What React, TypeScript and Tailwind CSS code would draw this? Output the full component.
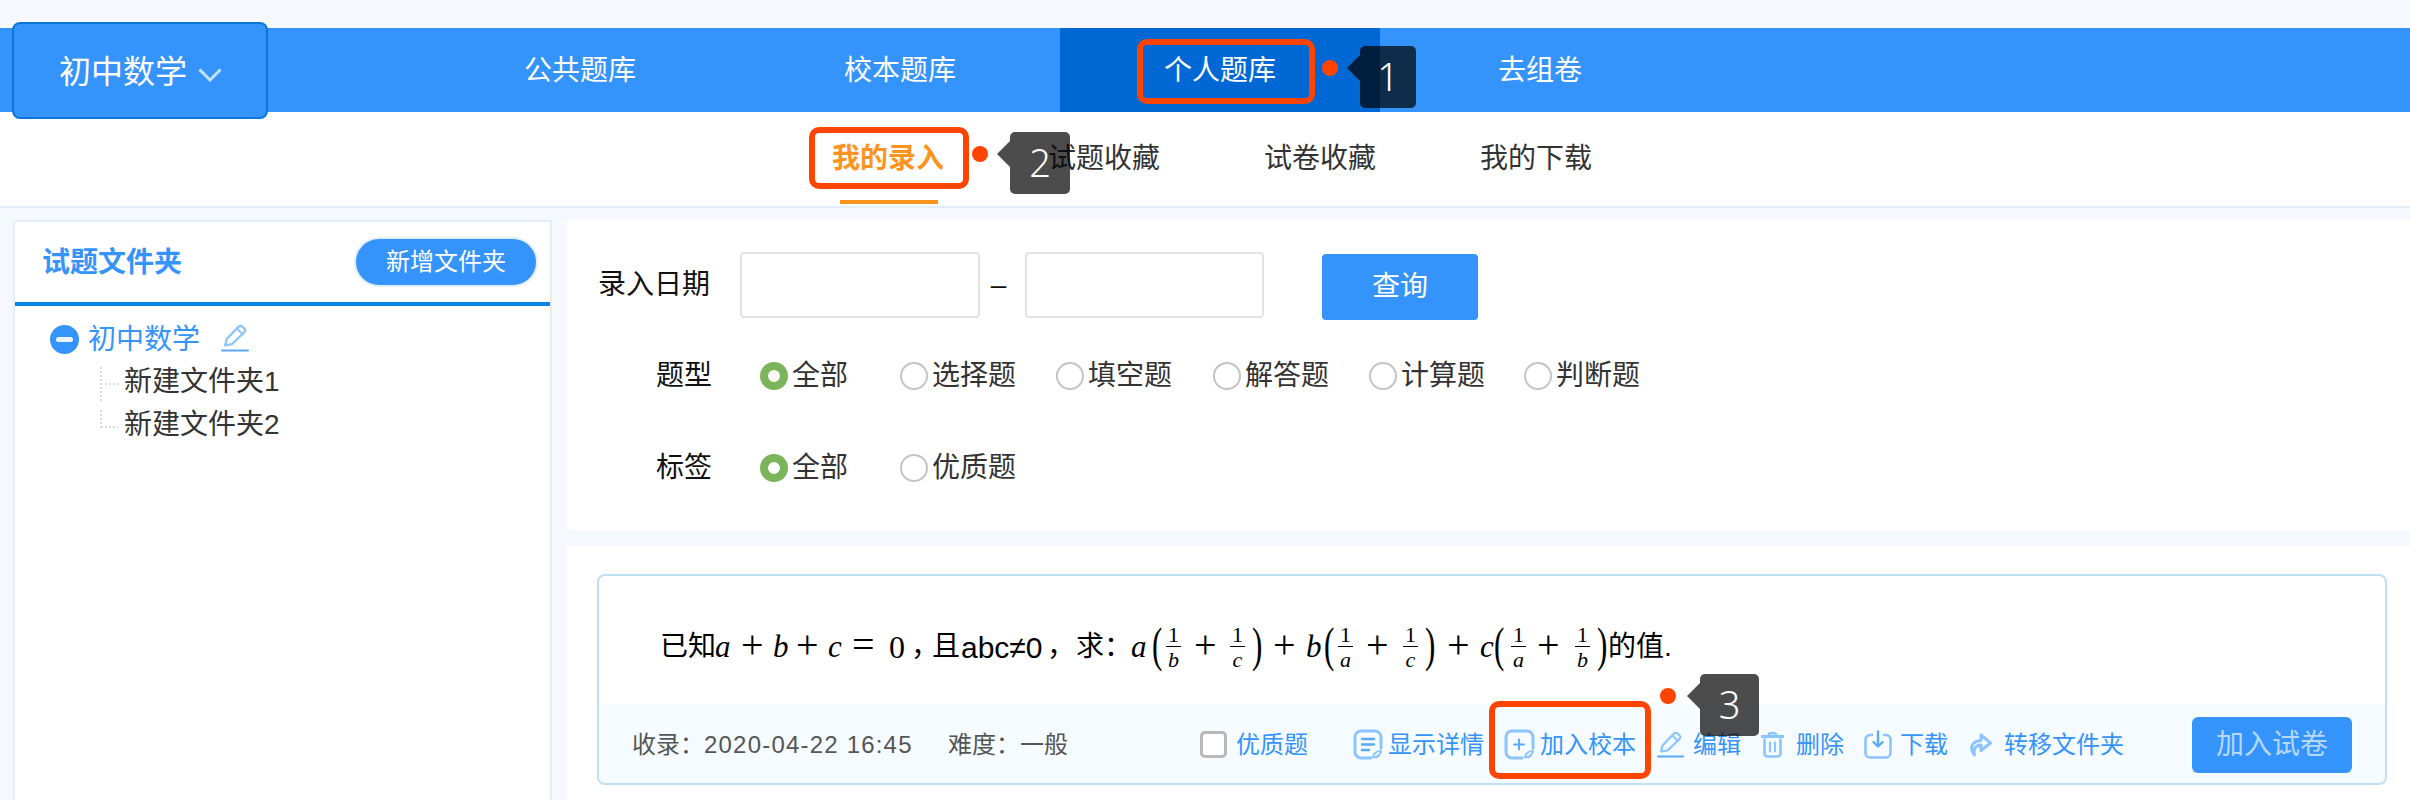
import React from "react";

const FONT = "[font-family:'Liberation_Sans','Noto_Sans_CJK_SC',sans-serif]";
const BLUE = "text-[#3594fb]";

function Callout({ n, dot, tip, tipBody }: { n: string; dot: string; tip: string; tipBody: string }) {
  return (
    <>
      <div className={`absolute w-[16px] h-[16px] rounded-full bg-[#ff4400] ${dot}`} />
      <div className={`absolute w-0 h-0 border-y-[13px] border-r-[13px] border-y-transparent border-r-[rgba(0,0,0,0.7)] ${tip}`} />
      <div
        className={`absolute rounded-[5px] bg-[rgba(0,0,0,0.7)] text-white flex items-center justify-center pb-[2px] text-[38px] font-light [font-family:'Noto_Sans',sans-serif] ${tipBody}`}
      >
        {n}
      </div>
    </>
  );
}

function Radio({ label, on, cls }: { label: string; on?: boolean; cls: string }) {
  return (
    <div className={`flex items-center ${cls}`}>
      {on ? (
        <span className="w-[28px] h-[28px] rounded-full border-[8px] border-[#7ab55c] bg-white" />
      ) : (
        <span className="w-[28px] h-[28px] rounded-full border-[2px] border-[#c4c4c4] bg-white" />
      )}
      <span className="ml-[4px] text-[28px] text-[#333]">{label}</span>
    </div>
  );
}

function T({ w, c = "", children }: { w: string; c?: string; children: React.ReactNode }) {
  return <span className={`inline-block shrink-0 ${w} ${c}`}>{children}</span>;
}

const MI = "[font-family:'Liberation_Serif',serif] italic text-[31px]";
const MR = "[font-family:'Liberation_Serif',serif] text-[32px]";
const OP = "[font-family:'Liberation_Serif',serif] text-[40px] leading-none -mt-[4px]";
const PAREN = "[font-family:'Liberation_Serif',serif] text-[31px] leading-none scale-y-[1.6] -mt-[6px]";

function Frac({ d, w }: { d: string; w: string }) {
  return (
    <span className={`inline-flex shrink-0 flex-col items-start ${w} [font-family:'Liberation_Serif',serif] text-[22px] leading-[21px]`}>
      <span className="w-[15px] text-center pb-[1px]">1</span>
      <span className="w-[15px] h-[1px] bg-black" />
      <span className="w-[15px] text-center italic pt-[2px]">{d}</span>
    </span>
  );
}

const IC = "#8cc4fd";

function IconDetail() {
  return (
    <svg width="30" height="31" viewBox="0 0 30 31" fill="none" stroke={IC} strokeWidth="3" strokeLinecap="round" className="shrink-0">
      <path d="M18 29H8a6 6 0 0 1-6-6V8a6 6 0 0 1 6-6h14a6 6 0 0 1 6 6v11" />
      <path d="M9 10h12M9 15.5h12M9 21h7" strokeWidth="2.4" stroke="#5aa9fb" />
      <path d="M20 28c1-4 4-6 8-6-0.5 4-3.5 7-8 6z" strokeWidth="2" />
    </svg>
  );
}

function IconAdd() {
  return (
    <svg width="31" height="31" viewBox="0 0 31 31" fill="none" stroke={IC} strokeWidth="3" strokeLinecap="round" className="shrink-0">
      <path d="M18 29H8a6 6 0 0 1-6-6V8a6 6 0 0 1 6-6h15a6 6 0 0 1 6 6v11" />
      <path d="M15 10.5v10M10 15.5h10" strokeWidth="2" stroke="#5aa9fb" />
      <path d="M21 28c1-4 4-6 8-6-0.5 4-3.5 7-8 6z" strokeWidth="2" />
    </svg>
  );
}

function IconPencil({ size = 27 }: { size?: number }) {
  return (
    <svg width={size} height={size} viewBox="0 0 27 27" fill="none" strokeLinecap="round" strokeLinejoin="round" className="shrink-0">
      <path d="M1 25.5h25" stroke="#5aa9fb" strokeWidth="2" />
      <path d="M4 20.5l1.5-6L17 2.5c1-1 2.5-1 3.5 0l2 2c1 1 1 2.5 0 3.5L10.5 19.5z" stroke={IC} strokeWidth="2.2" />
      <path d="M15.5 4.5l5.5 5.5" stroke={IC} strokeWidth="2" />
    </svg>
  );
}

function IconTrash() {
  return (
    <svg width="23" height="27" viewBox="0 0 23 27" fill="none" stroke={IC} strokeLinecap="round" className="shrink-0">
      <path d="M1 5.5h21" strokeWidth="3" />
      <path d="M8 3.5C8 1.5 15 1.5 15 3.5" strokeWidth="2.5" />
      <path d="M3.5 8.5v14a3 3 0 0 0 3 3h10a3 3 0 0 0 3-3v-14" strokeWidth="2.6" />
      <path d="M9 11.5v9M14 11.5v9" strokeWidth="2.2" />
    </svg>
  );
}

function IconDownload() {
  return (
    <svg width="28" height="29" viewBox="0 0 28 29" fill="none" strokeLinecap="round" strokeLinejoin="round" className="shrink-0">
      <path d="M8 5H6a4.5 4.5 0 0 0-4.5 4.5v14A4.5 4.5 0 0 0 6 27.5h16a4.5 4.5 0 0 0 4.5-4.5V9.5A4.5 4.5 0 0 0 22 5h-2" stroke={IC} strokeWidth="2.6" />
      <path d="M14 1.5v14" stroke="#5aa9fb" strokeWidth="2.4" />
      <path d="M9.5 12l4.5 4.5 4.5-4.5" stroke="#5aa9fb" strokeWidth="2.4" />
    </svg>
  );
}

function IconShare() {
  return (
    <svg width="23" height="25" viewBox="0 0 23 25" fill="none" stroke={IC} strokeWidth="3" strokeLinejoin="round" strokeLinecap="round" className="shrink-0">
      <path d="M5.5 23C1 18 1 9.5 12 8.5V3l9.5 8-9.5 7.5v-5.5C7 13.5 4 16 5.5 23z" />
    </svg>
  );
}

function Act({ icon, text, gap, mr }: { icon: React.ReactNode; text: string; gap: string; mr: string }) {
  return (
    <div className={`flex items-center shrink-0 ${gap} ${mr}`}>
      {icon}
      <span className={`text-[24px] ${BLUE} whitespace-nowrap`}>{text}</span>
    </div>
  );
}

function TreeChild({ label, last }: { label: string; last?: boolean }) {
  return (
    <div className="flex items-center h-[43px] pl-[85px]">
      <svg width="24" height="43" viewBox="0 0 24 43" fill="none" stroke="#dcdcdc" strokeWidth="2" strokeDasharray="2 2" className="shrink-0">
        <path d={last ? "M1 6v18M1 23h17" : "M1 6v36M1 23h17"} />
      </svg>
      <span className="pb-[2px] text-[28px] text-[#333] whitespace-nowrap">{label}</span>
    </div>
  );
}

export default function App() {
  return (
    <div className={`relative w-[2410px] h-[800px] overflow-hidden bg-[#f5f9fd] pt-[28px] ${FONT}`}>
      {/* top nav */}
      <nav className="flex h-[84px] pl-[420px] bg-[#3594fb] text-white text-[28px]">
        <a className="w-[320px] flex items-center justify-center pt-[2px]">公共题库</a>
        <a className="w-[320px] flex items-center justify-center pt-[2px]">校本题库</a>
        <a className="w-[320px] flex items-center justify-center pt-[2px] bg-[#0068d4]">个人题库</a>
        <a className="w-[320px] flex items-center justify-center pt-[2px]">去组卷</a>
      </nav>

      {/* sub nav */}
      <div className="flex h-[96px] pl-[780px] bg-white border-b-2 border-[#e3eefa] text-[28px] text-[#333]">
        <a className="relative w-[216px] flex items-center justify-center font-bold text-[#ff9320]">
          我的录入
          <span className="absolute left-[60px] bottom-[2px] w-[98px] h-[4px] bg-[#ff9320]" />
        </a>
        <a className="w-[216px] flex items-center justify-center">试题收藏</a>
        <a className="w-[216px] flex items-center justify-center">试卷收藏</a>
        <a className="w-[216px] flex items-center justify-center">我的下载</a>
      </div>

      {/* main */}
      <div className="flex pt-[12px] pl-[13px] gap-[15px] h-[592px]">
        <aside className="w-[539px] h-full bg-white border-2 border-[#e3eefa] border-b-0">
          <div className="flex h-[80px] items-center justify-between pl-[27px] pr-[12px] border-b-4 border-[#0a84e6] box-content">
            <span className={`text-[28px] font-bold pt-[2px] ${BLUE}`}>试题文件夹</span>
            <button className="w-[184px] h-[50px] rounded-full bg-[#3594fb] border-2 border-[#e3eefa] text-white text-[24px]">新增文件夹</button>
          </div>
          <div className="pt-[12px]">
            <div className="flex items-center h-[43px] pl-[35px]">
              <span className="w-[29px] h-[29px] rounded-full bg-[#3594fb] flex items-center justify-center shrink-0">
                <span className="w-[17px] h-[5px] rounded-full bg-white/90" />
              </span>
              <span className={`ml-[9px] text-[28px] ${BLUE}`}>初中数学</span>
              <span className="ml-[21px] -mt-[3px]">
                <IconPencil size={28} />
              </span>
            </div>
            <TreeChild label="新建文件夹1" />
            <TreeChild label="新建文件夹2" last />
          </div>
        </aside>

        <main className="flex-1 flex flex-col gap-[16px]">
          {/* filter */}
          <section className="h-[310px] bg-white pt-[32px] shrink-0">
            <div className="flex items-center h-[66px]">
              <span className="w-[143px] text-right text-[28px] text-[#111]">录入日期</span>
              <input className="ml-[30px] w-[240px] h-[66px] border-2 border-[#e3e3e3] rounded-[4px] bg-white" />
              <span className="w-[45px] text-center pr-[8px] text-[28px] text-[#111]">–</span>
              <input className="w-[239px] h-[66px] border-2 border-[#e3e3e3] rounded-[4px] bg-white" />
              <button className="ml-[58px] mt-[4px] w-[156px] h-[66px] rounded-[4px] bg-[#3594fb] text-white text-[28px]">查询</button>
            </div>
            <div className="flex items-center h-[56px] mt-[30px]">
              <span className="w-[145px] text-right text-[28px] text-[#111]">题型</span>
              <div className="ml-[48px] flex">
                <Radio label="全部" on cls="w-[140px]" />
                <Radio label="选择题" cls="w-[156px]" />
                <Radio label="填空题" cls="w-[157px]" />
                <Radio label="解答题" cls="w-[156px]" />
                <Radio label="计算题" cls="w-[155px]" />
                <Radio label="判断题" cls="w-[156px]" />
              </div>
            </div>
            <div className="flex items-center h-[56px] mt-[36px]">
              <span className="w-[145px] text-right text-[28px] text-[#111]">标签</span>
              <div className="ml-[48px] flex">
                <Radio label="全部" on cls="w-[140px]" />
                <Radio label="优质题" cls="w-[156px]" />
              </div>
            </div>
          </section>

          {/* question list */}
          <section className="flex-1 bg-white pt-[28px] pl-[30px] pr-[23px]">
            <div className="h-[211px] rounded-[8px] border-2 border-[#bfdff2] overflow-hidden flex flex-col">
              <div className="h-[128px] shrink-0 flex items-center pl-[61px] pt-[14px] text-[28px] text-black whitespace-nowrap">
                <T w="w-[55px]">已知</T>
                <T w="w-[26px]" c={MI}>a</T>
                <T w="w-[32px]" c={OP}>+</T>
                <T w="w-[23px]" c={MI}>b</T>
                <T w="w-[32px]" c={OP}>+</T>
                <T w="w-[24px]" c={MI}>c</T>
                <T w="w-[37px]" c={OP}>=</T>
                <T w="w-[22px]" c={MR}>0</T>
                <T w="w-[21px]" c="tracking-[-8px]">，</T>
                <T w="w-[29px]">且</T>
                <T w="w-[86px]" c="text-[30px]">abc≠0</T>
                <T w="w-[29px]" c="tracking-[-1px]">，</T>
                <T w="w-[55px]">求：</T>
                <T w="w-[21px]" c={MI}>a</T>
                <T w="w-[14px]" c={PAREN}>(</T>
                <Frac d="b" w="w-[28px]" />
                <T w="w-[36px]" c={OP}>+</T>
                <Frac d="c" w="w-[22px]" />
                <T w="w-[21px]" c={PAREN}>)</T>
                <T w="w-[33px]" c={OP}>+</T>
                <T w="w-[18px]" c={MI}>b</T>
                <T w="w-[14px]" c={PAREN}>(</T>
                <Frac d="a" w="w-[28px]" />
                <T w="w-[37px]" c={OP}>+</T>
                <Frac d="c" w="w-[22px]" />
                <T w="w-[22px]" c={PAREN}>)</T>
                <T w="w-[33px]" c={OP}>+</T>
                <T w="w-[14px]" c={MI}>c</T>
                <T w="w-[17px]" c={PAREN}>(</T>
                <Frac d="a" w="w-[26px]" />
                <T w="w-[38px]" c={OP}>+</T>
                <Frac d="b" w="w-[22px]" />
                <T w="w-[11px]" c={PAREN}>)</T>
                <span>的值.</span>
              </div>
              <div className="flex-1 flex items-center bg-[#f5fbff] pl-[33px] pr-[33px] pt-[2px] text-[24px] text-[#555] whitespace-nowrap">
                <span className="w-[316px]">
                  收录：<span className="tracking-[1.2px]">2020-04-22 16:45</span>
                </span>
                <span>难度：一般</span>
                <div className="ml-auto flex items-center">
                  <div className="flex items-center gap-[9px] mr-[45px]">
                    <span className="w-[27px] h-[27px] rounded-[5px] border-[3px] border-[#b8b8b8] bg-white" />
                    <span className={`text-[24px] ${BLUE}`}>优质题</span>
                  </div>
                  <Act icon={<IconDetail />} text="显示详情" gap="gap-[5px]" mr="mr-[20px]" />
                  <Act icon={<IconAdd />} text="加入校本" gap="gap-[5px]" mr="mr-[21px]" />
                  <Act icon={<IconPencil />} text="编辑" gap="gap-[9px]" mr="mr-[20px]" />
                  <Act icon={<IconTrash />} text="删除" gap="gap-[12px]" mr="mr-[20px]" />
                  <Act icon={<IconDownload />} text="下载" gap="gap-[8px]" mr="mr-[21px]" />
                  <Act icon={<IconShare />} text="转移文件夹" gap="gap-[12px]" mr="mr-[68px]" />
                  <button className="w-[160px] h-[56px] rounded-[6px] bg-[#3594fb] text-[#b7d8fb] text-[28px]">加入试卷</button>
                </div>
              </div>
            </div>
          </section>
        </main>
      </div>

      {/* subject selector over the nav bar */}
      <button className="absolute left-[12px] top-[22px] w-[256px] h-[97px] rounded-[8px] bg-[#3594fb] border-2 border-[#0a76dc] text-white text-[32px] flex items-center pl-[45px] pt-[2px]">
        初中数学
        <svg width="24" height="14" viewBox="0 0 24 14" fill="none" stroke="#c6e0fd" strokeWidth="3" className="ml-[11px] mt-[6px]">
          <path d="M1.5 1.5L12 12 22.5 1.5" />
        </svg>
      </button>

      {/* annotations laid over the screenshot */}
      <div className="absolute left-[1137px] top-[39px] w-[178px] h-[65px] rounded-[10px] border-[6px] border-[#ff4400]" />
      <Callout n="1" dot="left-[1322px] top-[60px]" tip="left-[1347px] top-[55px]" tipBody="left-[1360px] top-[46px] w-[56px] h-[62px]" />

      <div className="absolute left-[809px] top-[127px] w-[160px] h-[62px] rounded-[10px] border-[6px] border-[#ff4400]" />
      <Callout n="2" dot="left-[972px] top-[146px]" tip="left-[997px] top-[141px]" tipBody="left-[1010px] top-[132px] w-[60px] h-[62px]" />

      <div className="absolute left-[1489px] top-[701px] w-[162px] h-[78px] rounded-[10px] border-[6px] border-[#ff4400]" />
      <Callout n="3" dot="left-[1660px] top-[688px]" tip="left-[1687px] top-[683px]" tipBody="left-[1700px] top-[674px] w-[59px] h-[62px]" />
    </div>
  );
}
